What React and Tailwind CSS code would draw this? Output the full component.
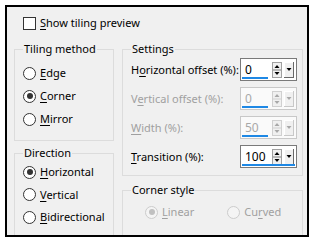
import React from "react";

function Mn({ text, u, className = "" }) {
  if (u < 0) return <span className={className}>{text}</span>;
  return (
    <span className={"whitespace-nowrap " + className}>
      {text.slice(0, u)}
      <span className="underline underline-offset-2">{text[u]}</span>
      {text.slice(u + 1)}
    </span>
  );
}

function Radio({ label, u, checked, disabled }) {
  return (
    <div className="flex items-center h-[16px] gap-[4px]">
      <span
        className={
          "w-[13px] h-[13px] rounded-full border flex items-center justify-center " +
          (disabled ? "border-[#cccccc] bg-[#f4f4f4]" : "border-[#333333] bg-white")
        }
      >
        {checked && (
          <span
            className={
              "w-[6px] h-[6px] rounded-full " + (disabled ? "bg-[#c0c0c0]" : "bg-[#333333]")
            }
          />
        )}
      </span>
      <Mn text={label} u={u} className={disabled ? "text-[#a0a0a0]" : "text-black"} />
    </div>
  );
}

function Spinner({ disabled }) {
  const a = disabled ? "#a8a8a8" : "#000000";
  return (
    <svg width="24" height="16" viewBox="0 0 24 16">
      {/* up / down box */}
      <rect x="0.5" y="0.5" width="9" height="15" fill="#f0f0f0" stroke={disabled ? "#d0d0d0" : "#a0a0a0"} />
      <line x1="1" y1="8" x2="9" y2="8" stroke={disabled ? "#d0d0d0" : "#808080"} />
      <path d="M5 3 L7.5 6 L2.5 6 Z" fill={a} />
      <path d="M2.5 10 L7.5 10 L5 13 Z" fill={a} />
      {/* dropdown button */}
      <rect x="12" y="0" width="10" height="16" fill="#f0f0f0" />
      <line x1="12.5" y1="0" x2="12.5" y2="16" stroke="#ffffff" />
      <line x1="12" y1="0.5" x2="22" y2="0.5" stroke="#ffffff" />
      <line x1="21.5" y1="0" x2="21.5" y2="16" stroke={disabled ? "#c8c8c8" : "#696969"} />
      <line x1="12" y1="15.5" x2="22" y2="15.5" stroke={disabled ? "#c8c8c8" : "#696969"} />
      <path d="M14.5 6 L19.5 6 L17 9 Z" fill={a} />
    </svg>
  );
}

function NumField({ value, disabled, focused }) {
  return (
    <div
      className={
        "relative shrink-0 w-[57px] h-[23px] border flex items-center " +
        (disabled ? "border-[#c8c8c8] bg-[#fafafa]" : "border-[#7a7a7a] bg-white")
      }
    >
      <span
        className={
          "pl-[4px] w-[31px] text-[12px] " + (disabled ? "text-[#a8a8a8]" : "text-black")
        }
      >
        {value}
      </span>
      <Spinner disabled={disabled} />
      <span
        className={
          "absolute bottom-[1px] left-[1px] h-[2px] bg-[#1e88e5] " +
          (focused ? "right-[1px]" : "w-[26px]")
        }
      />
    </div>
  );
}

function Row({ label, u, value, disabled, focused }) {
  return (
    <div className="flex items-center justify-between h-[23px]">
      <Mn text={label} u={u} className={disabled ? "text-[#a0a0a0]" : "text-black"} />
      <NumField value={value} disabled={disabled} focused={focused} />
    </div>
  );
}

export default function App() {
  return (
    <div className="w-[314px] h-[242px] bg-white p-[5px] font-['Segoe_UI','Noto_Sans',sans-serif] text-[11px] leading-[16px]">
      <div className="h-[232px] border-2 border-black bg-[#f0f0f0] flex flex-col overflow-hidden">
        {/* checkbox */}
        <div className="flex items-center gap-[4px] h-[16px] mt-[8px] ml-[16px]">
          <span className="w-[13px] h-[13px] border border-[#333333] bg-white" />
          <Mn text="Show tiling preview" u={0} />
        </div>

        <div className="flex gap-[8px] mt-[10px] pl-[7px] pr-[4px] flex-1">
          {/* left column */}
          <div className="w-[100px] flex flex-col">
            <fieldset className="border border-[#dcdcdc] pl-[8px] pb-[13px] h-[100px]">
              <legend className="px-[1px]">Tiling method</legend>
              <div className="flex flex-col gap-[7px] mt-[8px]">
                <Radio label="Edge" u={0} />
                <Radio label="Corner" u={0} checked />
                <Radio label="Mirror" u={0} />
              </div>
            </fieldset>
            <fieldset className="border border-[#dcdcdc] border-b-0 pl-[8px] mt-[4px] flex-1">
              <legend className="px-[1px]">Direction</legend>
              <div className="flex flex-col gap-[6.5px] mt-[3px]">
                <Radio label="Horizontal" u={0} checked />
                <Radio label="Vertical" u={0} />
                <Radio label="Bidirectional" u={0} />
              </div>
            </fieldset>
          </div>

          {/* right column */}
          <div className="flex-1 flex flex-col">
            <fieldset className="border border-[#dcdcdc] pl-[8px] pr-[5px] pb-[7px]">
              <legend className="px-[1px]">Settings</legend>
              <div className="flex flex-col gap-[6px] mt-[1px]">
                <Row label="Horizontal offset (%):" u={1} value="0" />
                <Row label="Vertical offset (%):" u={1} value="0" disabled />
                <Row label="Width (%):" u={0} value="50" disabled />
                <Row label="Transition (%):" u={0} value="100" focused />
              </div>
            </fieldset>
            <fieldset className="border border-[#dcdcdc] border-b-0 pl-[22px] mt-[6px] flex-1">
              <legend className="px-[1px] ml-[-14px]">Corner style</legend>
              <div className="flex gap-[33px] mt-[6px]">
                <Radio label="Linear" u={0} checked disabled />
                <Radio label="Curved" u={2} disabled />
              </div>
            </fieldset>
          </div>
        </div>
      </div>
    </div>
  );
}
